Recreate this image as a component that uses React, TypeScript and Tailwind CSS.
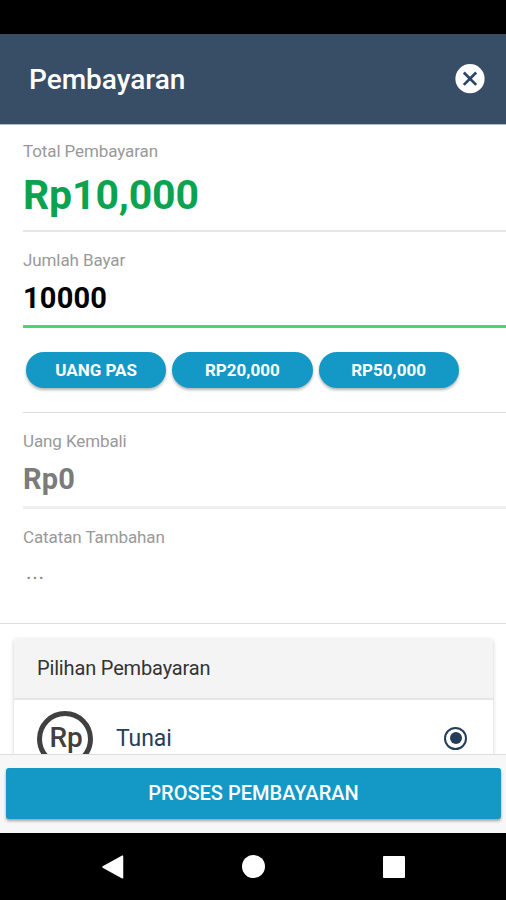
const quickAmounts = ['UANG PAS', 'RP20,000', 'RP50,000'];

function CloseIcon() {
  return (
    <svg className="block size-[30px]" viewBox="0 0 30 30">
      <circle cx="15" cy="14.7" r="14.6" fill="#fff" />
      <path d="M8.8 8.5l12.4 12.4M21.2 8.5L8.8 20.9" stroke="#2c4663" strokeWidth="2.7" />
    </svg>
  );
}

function RupiahIcon() {
  return (
    <div className="flex size-14 shrink-0 items-center justify-center rounded-full border-[5px] border-[#404040] text-[28px] font-medium leading-none text-[#404040]">
      <span className="-translate-y-px translate-x-px tracking-[-0.3px]">Rp</span>
    </div>
  );
}

function Label({ children }: { children: string }) {
  return <div className="h-6 text-[17px] leading-6 tracking-[-0.1px] text-[#999]">{children}</div>;
}

export default function App() {
  return (
    <div className="flex h-[900px] w-[506px] flex-col overflow-hidden bg-white font-['Roboto',sans-serif]">
      <div className="h-[34px] shrink-0 bg-black" />
      <header className="flex h-[90px] shrink-0 items-center justify-between bg-[#374e66] pl-[29px] pr-[21px]">
        <h1 className="pt-[2px] text-[28px] font-medium leading-8 text-white">Pembayaran</h1>
        <CloseIcon />
      </header>

      <main className="flex h-[630px] shrink-0 flex-col overflow-hidden border-t border-[#b4bbc3]">
        <section className="ml-[23px] h-[107px] shrink-0 border-b-2 border-[#e6e6e6] pt-[14px]">
          <Label>Total Pembayaran</Label>
          <div className="mt-2 text-[41px] font-bold leading-[48px] tracking-[-0.15px] text-[#0ba350]">Rp10,000</div>
        </section>
        <section className="ml-[23px] h-[96px] shrink-0 border-b-[3px] border-[#4bd671] pt-4">
          <Label>Jumlah Bayar</Label>
          <div className="mt-[9px] text-[29px] font-bold leading-[34px] tracking-[0.2px] text-black">10000</div>
        </section>
        <div className="ml-[23px] flex h-[85px] shrink-0 gap-[6px] border-b border-[#dedede] pl-[3px] pt-6">
          {quickAmounts.map((amount) => (
            <button
              key={amount}
              className="h-9 w-[140.25px] rounded-full bg-[#1498c5] text-[17px] font-bold leading-9 text-white shadow-[0_2px_3px_rgba(0,0,0,0.3)]"
            >
              {amount}
            </button>
          ))}
        </div>
        <section className="ml-[23px] h-[96px] shrink-0 border-b-[3px] border-[#efefef] pt-4">
          <Label>Uang Kembali</Label>
          <div className="mt-[9px] text-[29px] font-bold leading-[34px] tracking-[0.2px] text-[#7b7b7b]">Rp0</div>
        </section>
        <section className="h-[115px] shrink-0 border-b border-[#dcdcdc] pl-[23px] pt-4">
          <Label>Catatan Tambahan</Label>
          <div className="mt-[11px] pl-[3px] text-[21px] leading-6 tracking-[0.7px] text-[#888]">...</div>
        </section>

        <section className="ml-[14px] mr-[13px] mt-[15px] h-[150px] shrink-0 rounded-t-[3px] bg-white shadow-[0_1px_4px_rgba(0,0,0,0.2)]">
          <h2 className="h-[61px] rounded-t-[3px] border-b-2 border-[#e6e6e6] bg-[#f4f4f4] pl-[23px] text-[20px] leading-[58px] tracking-[-0.16px] text-[#333]">
            Pilihan Pembayaran
          </h2>
          <div className="flex items-center pl-[23px] pr-[26px] pt-[11px]">
            <RupiahIcon />
            <span className="ml-[23px] flex-1 text-[23px] leading-7 tracking-[-0.1px] text-[#26405c]">Tunai</span>
            <span className="flex size-[23px] -translate-y-px items-center justify-center rounded-full border-[2.5px] border-[#243e59]">
              <span className="size-3 rounded-full bg-[#243e59]" />
            </span>
          </div>
        </section>
      </main>

      <footer className="h-[79px] shrink-0 border-t border-[#dedede] bg-[#f7f7f7] pl-[6px] pr-[5px] pt-[13px]">
        <button className="h-[51px] w-full rounded-[3px] bg-[#1498c5] pb-[2px] text-[20px] font-medium text-white shadow-[0_2px_3px_rgba(0,0,0,0.35)]">
          PROSES PEMBAYARAN
        </button>
      </footer>

      <nav className="flex h-[67px] shrink-0 items-center bg-black pl-[102px]">
        <svg className="block h-6 w-[22px]" viewBox="0 0 22 24">
          <path d="M20.5 1.2v21.6L1 12z" fill="#fff" stroke="#fff" strokeWidth="1.5" strokeLinejoin="round" />
        </svg>
        <span className="ml-[118px] size-[23px] rounded-full bg-white" />
        <span className="ml-[118px] size-[22px] rounded-[1px] bg-white" />
      </nav>
    </div>
  );
}
